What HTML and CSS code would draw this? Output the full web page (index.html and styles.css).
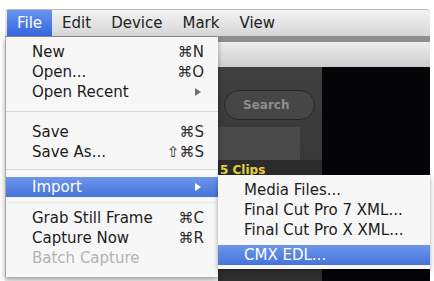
FILE: index.html
```html
<!DOCTYPE html>
<html>

	<head>
		<meta charset="UTF-8">
		<title>File menu</title>
		<link rel="stylesheet" href="styles.css">
	</head>

	<body>
		<div class="screen">
			<div class="menubar">
				<span class="menu-title active">File</span>
				<span class="menu-title">Edit</span>
				<span class="menu-title">Device</span>
				<span class="menu-title">Mark</span>
				<span class="menu-title">View</span>
			</div>
			<div class="title-strip"></div>
			<div class="toolbar"></div>
			<div class="workspace">
				<div class="sidebar"></div>
				<div class="browser">
					<div class="search-row"><span class="search">Search</span></div>
					<div class="list-row"></div>
					<div class="clip-bar"><span class="clip-count">5 Clips</span></div>
				</div>
				<div class="viewer"></div>
			</div>

			<div class="menu file-menu">
				<div class="item"><span>New</span><span class="key">⌘N</span></div>
				<div class="item"><span>Open...</span><span class="key">⌘O</span></div>
				<div class="item"><span>Open Recent</span><span class="arrow"></span></div>
				<div class="sep sep-wide"></div>
				<div class="item"><span>Save</span><span class="key">⌘S</span></div>
				<div class="item"><span>Save As...</span><span class="key">⇧⌘S</span></div>
				<div class="sep"></div>
				<div class="item selected"><span>Import</span><span class="arrow"></span></div>
				<div class="sep sep-tight"></div>
				<div class="item"><span>Grab Still Frame</span><span class="key">⌘C</span></div>
				<div class="item"><span>Capture Now</span><span class="key">⌘R</span></div>
				<div class="item disabled"><span>Batch Capture</span></div>
			</div>

			<div class="menu submenu">
				<div class="item"><span>Media Files...</span></div>
				<div class="item"><span>Final Cut Pro 7 XML...</span></div>
				<div class="item"><span>Final Cut Pro X XML...</span></div>
				<div class="item selected last"><span>CMX EDL...</span></div>
			</div>
		</div>
	</body>

</html>
```

FILE: styles.css
```css
* {
	margin: 0px;
	padding: 0px;
	box-sizing: border-box;
}

body {
	background: #fff;
	font-family: "DejaVu Sans", "Noto Sans", sans-serif;
	font-size: 15px;
	color: #1c1c1c;
	overflow: hidden;
}

.screen {
	position: relative;
	width: 425px;
	height: 272px;
	margin: 9px 0 0 5px;
}

.menubar {
	display: flex;
	height: 27px;
	padding-left: 2px;
	border-top: 1px solid #b9b9b9;
	border-radius: 4px 4px 0 0;
	background: linear-gradient(#f3f3f3, #d6d6d6);
}

.menu-title {
	padding: 0 10px;
	line-height: 26px;
	color: #222;
}

.menu-title.active {
	color: #fff;
	background: linear-gradient(#6595ee, #3566dc);
}

.title-strip {
	height: 6px;
	background: #8e8e8e;
}

.toolbar {
	height: 25px;
	background: linear-gradient(#eeeeee, #cdcdcd);
}

.workspace {
	display: flex;
	height: 214px;
}

.sidebar {
	width: 213px;
	background: #ececec;
}

.browser {
	width: 104px;
	background: linear-gradient(#404040, #2e2e2e);
}

.search-row {
	padding: 23px 0 0 6px;
	height: 60px;
}

.search {
	display: block;
	width: 91px;
	height: 30px;
	line-height: 28px;
	padding-left: 18px;
	border: 1px solid #262626;
	border-radius: 15px;
	background: #464646;
	color: #8d8d8d;
	font-size: 12px;
	font-weight: bold;
}

.list-row {
	height: 33px;
	margin-right: 22px;
	background: #4a4a4a;
}

.clip-bar {
	height: 15px;
	background: #2b2b2b;
}

.clip-count {
	padding-left: 2px;
	line-height: 14px;
	font-size: 12px;
	font-weight: bold;
	color: #e6d43a;
}

.viewer {
	flex: 1;
	background: #050507;
}

.menu {
	position: absolute;
	background: #f7f7f7;
	box-shadow: 0 2px 5px rgba(0, 0, 0, 0.35);
}

.file-menu {
	left: 0;
	top: 28px;
	width: 213px;
	padding: 5px 0 9px;
	border-left: 1px solid #a8a8a8;
}

.submenu {
	left: 213px;
	top: 166px;
	width: 212px;
	padding: 5px 0 4px;
}

.item {
	display: flex;
	justify-content: space-between;
	align-items: center;
	height: 20px;
	padding: 0 14px 0 26px;
	white-space: nowrap;
}

.submenu .item {
	padding-left: 26px;
}

.item.selected {
	color: #fff;
	background: linear-gradient(#6e96ea, #4473db);
}

.item.last {
	margin-top: 5px;
}

.item.disabled {
	color: #b2b2b2;
}

.key {
	color: #2a2a2a;
}

.arrow {
	width: 0;
	height: 0;
	margin-right: 3px;
	border-left: 6px solid #6f6f6f;
	border-top: 4px solid transparent;
	border-bottom: 4px solid transparent;
}

.selected .arrow {
	border-left-color: #fff;
}

.sep {
	height: 15px;
	padding-top: 7px;
}

.sep::after {
	content: "";
	display: block;
	height: 1px;
	background: #d9d9d9;
}

.sep-wide {
	height: 20px;
	padding-top: 9px;
}

.sep-tight {
	height: 11px;
	padding-top: 5px;
}

.sep-tight::after {
	background: #ececec;
}
```
